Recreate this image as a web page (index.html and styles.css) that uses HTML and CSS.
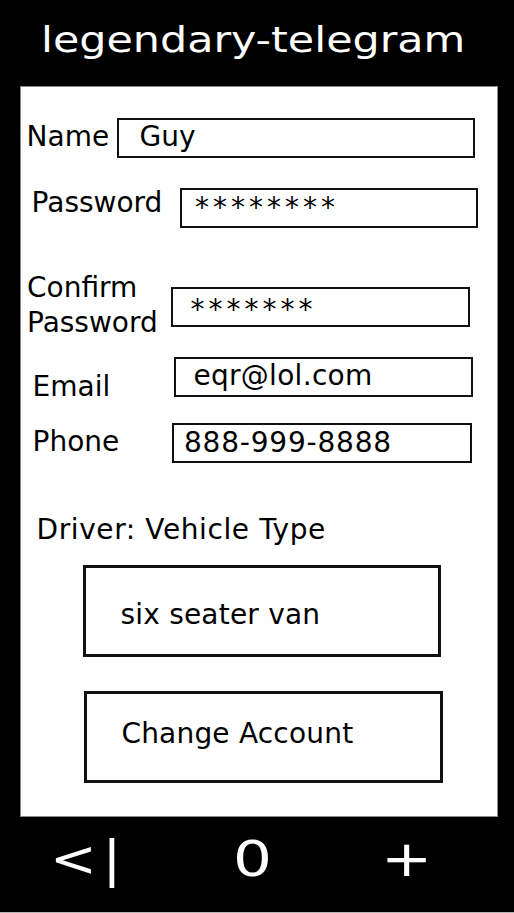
FILE: index.html
```html
<!DOCTYPE html>
<html lang="en">
<head>
<meta charset="utf-8">
<title>legendary-telegram</title>
<link rel="stylesheet" href="styles.css">
</head>
<body>
<div class="screen">
  <header class="header"><span class="title">legendary-telegram</span></header>
  <main class="panel">
    <div class="row row-name">
      <div class="label">Name</div>
      <div class="field">Guy</div>
    </div>
    <div class="row row-pass">
      <div class="label">Password</div>
      <div class="field stars">********</div>
    </div>
    <div class="row row-confirm">
      <div class="label">Confirm<br>Password</div>
      <div class="field stars">*******</div>
    </div>
    <div class="row row-email">
      <div class="label">Email</div>
      <div class="field">eqr@lol.com</div>
    </div>
    <div class="row row-phone">
      <div class="label">Phone</div>
      <div class="field phone">888-999-8888</div>
    </div>
    <div class="driver">Driver: Vehicle Type</div>
    <div class="btn btn-vehicle">six seater van</div>
    <div class="btn btn-account">Change Account</div>
  </main>
  <nav class="nav">
    <span class="nav-item nav-back">&lt;|</span>
    <span class="nav-item nav-home">0</span>
    <span class="nav-item nav-add">+</span>
  </nav>
</div>
</body>
</html>
```
FILE: styles.css
```css
* { box-sizing: border-box; }
html, body { margin: 0; padding: 0; background: #000; }
body {
  width: 514px;
  height: 913px;
  overflow: hidden;
  font-family: "DejaVu Sans", Verdana, sans-serif;
  color: #000;
}
.screen { width: 514px; height: 913px; display: flex; flex-direction: column; overflow: hidden; }

.header {
  flex: none;
  height: 86px;
  padding: 19.5px 0 0 41px;
  font-size: 36px;
  line-height: 40px;
  color: #fff;
  overflow: hidden;
}
.title { display: inline-block; transform: scaleX(1.19); transform-origin: 0 50%; }

.panel {
  flex: none;
  margin: 0 16px 0 20px;
  height: 731px;
  background: #fff;
  box-shadow: inset 0 0 0 1px #8a8a8a;
  font-size: 28px;
  line-height: 32px;
  display: flex;
  flex-direction: column;
}

.row { display: flex; align-items: flex-start; flex: none; }
.label { flex: none; white-space: nowrap; }
.field {
  flex: none;
  height: 40px;
  border: 2px solid #111;
  white-space: nowrap;
}
.stars { letter-spacing: 4px; }
.phone { letter-spacing: 0.8px; }

.row-name { margin-top: 32px; height: 40px; }
.row-name .label { margin: 3.3px 0 0 6.6px; width: 90.4px; }
.row-name .field { width: 358px; padding: 1.3px 0 0 20.5px; }

.row-pass { margin-top: 29px; height: 41px; }
.row-pass .label { margin: 0 0 0 11.6px; width: 148.4px; }
.row-pass .field { margin-top: 1px; width: 298px; padding: 2.3px 0 0 13px; }

.row-confirm { margin-top: 41.8px; height: 70px; }
.row-confirm .label { margin: 0 0 0 7px; width: 144px; line-height: 35px; }
.row-confirm .field { margin-top: 17.2px; width: 299px; padding: 5px 0 0 17.5px; }

.row-email { margin-top: 17.2px; height: 46.3px; }
.row-email .label { margin: 14.3px 0 0 12.6px; width: 141.4px; }
.row-email .field { width: 299px; padding: 1px 0 0 17.4px; letter-spacing: 0.3px; }

.row-phone { margin-top: 19.7px; height: 40px; }
.row-phone .label { margin: 3.3px 0 0 12.6px; width: 139.4px; }
.row-phone .field { width: 300px; padding: 2.3px 0 0 10px; }

.driver { margin: 51.3px 0 0 16.5px; height: 32px; flex: none; letter-spacing: 0.6px; }

.btn {
  flex: none;
  height: 92px;
  border: 3px solid #111;
  white-space: nowrap;
}
.btn-vehicle { margin: 18.7px 0 0 63px; width: 358px; padding: 31.3px 0 0 34.5px; letter-spacing: 0.2px; }
.btn-account { margin: 34px 0 0 64px; width: 359px; padding: 24.3px 0 0 34.4px; letter-spacing: 0.2px; }

.nav {
  flex: none;
  height: 96px;
  padding-left: 50px;
  display: grid;
  grid-template-columns: 183px 147.6px 100px;
  align-items: start;
  font-size: 49px;
  line-height: 86px;
  color: #fff;
  border-bottom: 1px solid #b5b5b5;
  overflow: hidden;
}
.nav-item { display: inline-block; transform-origin: 0 50%; white-space: nowrap; }
.nav-back { transform: scaleX(1.14); letter-spacing: 5px; }
.nav-home { transform: scaleX(1.25); }
.nav-add { transform: scaleX(1.25); }
```
